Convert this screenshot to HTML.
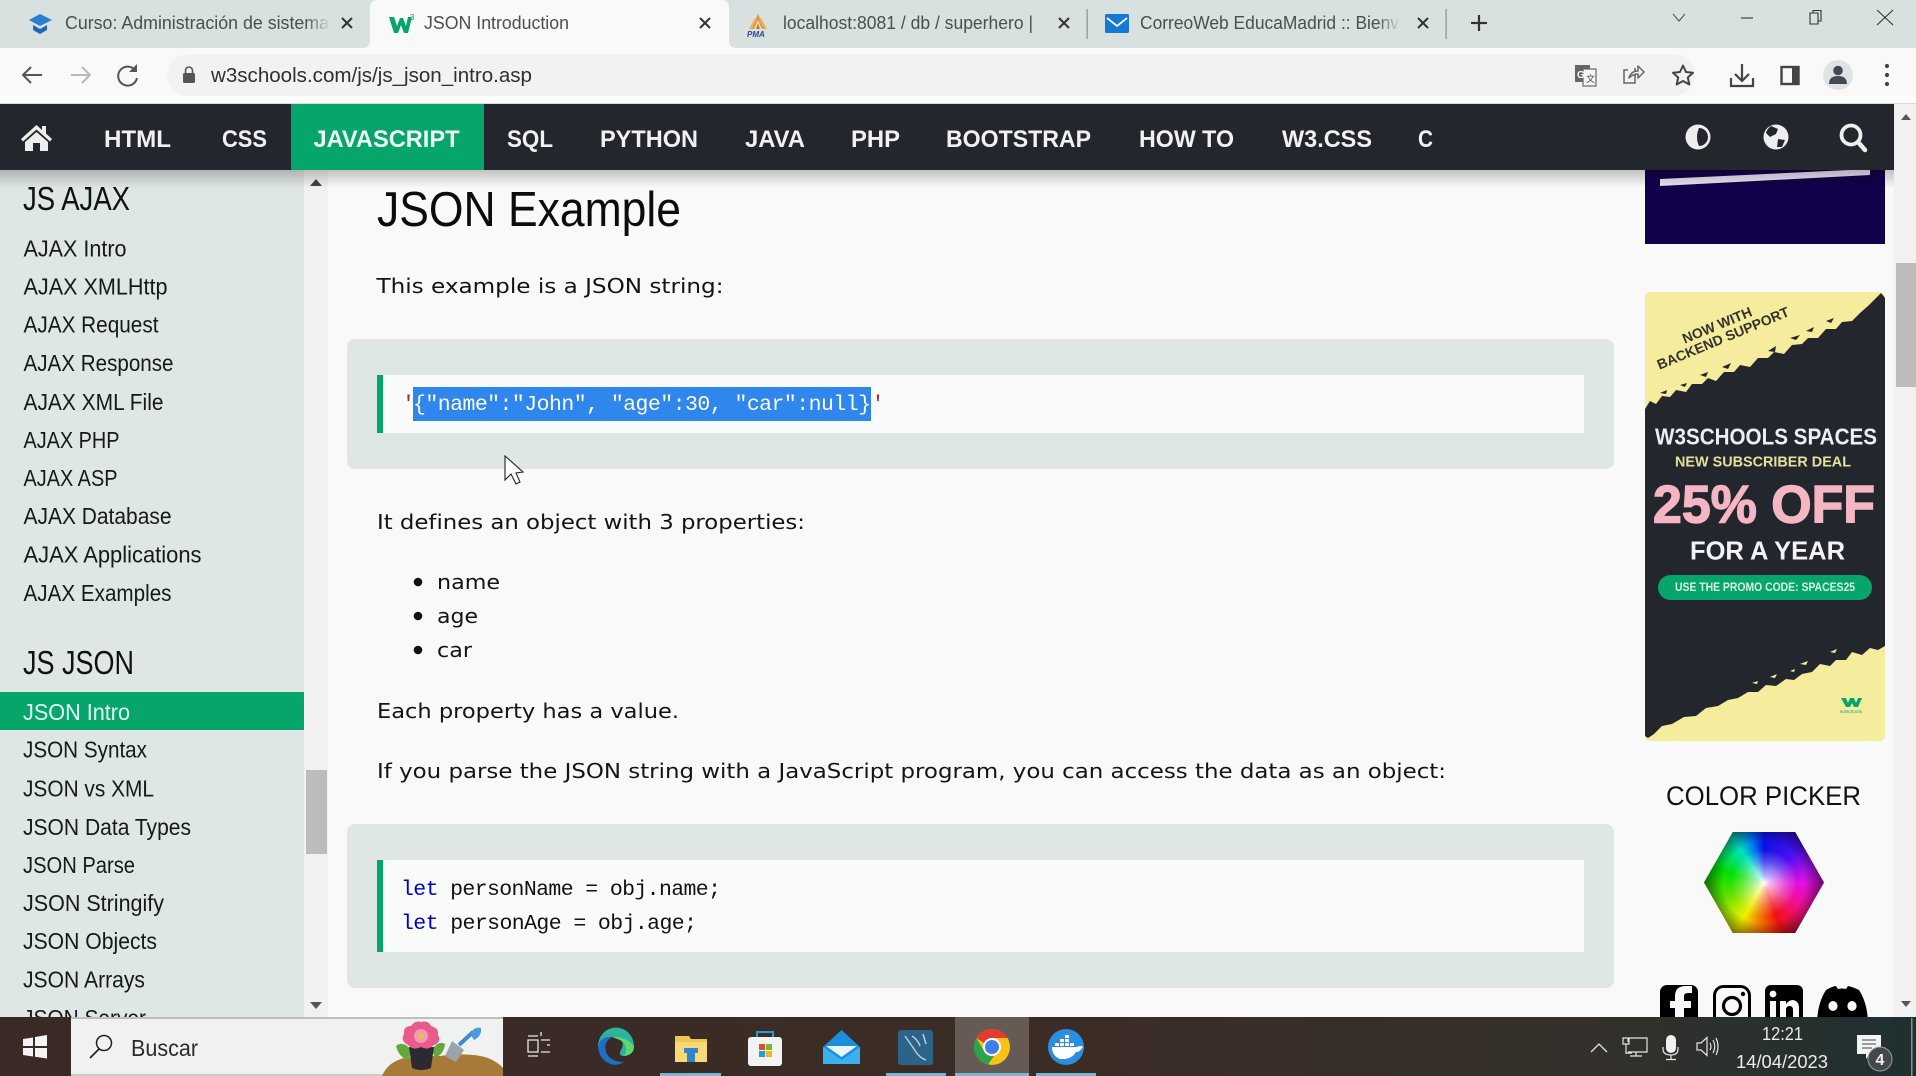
<!DOCTYPE html>
<html lang="es"><head><meta charset="utf-8"><title>JSON Introduction</title>
<style>
html,body{margin:0;padding:0;width:1916px;height:1076px;overflow:hidden;background:#f9f9f9}
svg{position:absolute;left:0;top:0;display:block}
.t{font:18px "Liberation Sans",sans-serif;fill:#4a4f50}
.n{font:bold 24.5px "Liberation Sans",sans-serif;fill:#f1f1f1}
.s{font:23.5px "Liberation Sans",sans-serif;fill:#15191a}
.h{font:33px "Liberation Sans",sans-serif;fill:#111}
.b{font:20px "DejaVu Sans",sans-serif;fill:#141414}
.m{font:21.5px "Liberation Mono",monospace;fill:#111}
.a{font-family:"Liberation Sans",sans-serif;font-weight:bold}
#hex{position:absolute;left:1704px;top:832px;width:120px;height:101px;clip-path:polygon(24% 0,76% 0,100% 50%,76% 100%,24% 100%,0 50%);
background:radial-gradient(circle 60px at 50% 50%,#fff 0,rgba(255,255,255,.7) 10%,rgba(255,255,255,.25) 36%,rgba(255,255,255,0) 55%),radial-gradient(circle 60px at 50% 50%,rgba(0,0,0,0) 68%,rgba(0,0,0,.55) 100%),conic-gradient(from 0deg at 50% 50%,#0a10e0 0deg,#4a10f0 45deg,#e010e0 90deg,#f0108a 125deg,#f01010 160deg,#f08a00 190deg,#f0f000 210deg,#60e000 250deg,#00e000 285deg,#00e0c0 325deg,#0070f0 345deg,#0a10e0 360deg)}
</style></head><body>
<svg width="1916" height="1076" viewBox="0 0 1916 1076" xmlns="http://www.w3.org/2000/svg">
<defs>
<linearGradient id="f1"><stop offset="0" stop-color="#d8e0e0" stop-opacity="0"/><stop offset="1" stop-color="#d8e0e0"/></linearGradient>
<linearGradient id="sh" x1="0" y1="0" x2="0" y2="1"><stop offset="0" stop-color="#000" stop-opacity=".22"/><stop offset="1" stop-color="#000" stop-opacity="0"/></linearGradient>
<linearGradient id="tb"><stop offset="0" stop-color="#3a2a25"/><stop offset=".55" stop-color="#3c2c26"/><stop offset=".82" stop-color="#35302b"/><stop offset="1" stop-color="#1f3030"/></linearGradient>
</defs>

<!-- page -->
<rect width="1916" height="1076" fill="#f9f9f9"/>
<rect x="0" y="170" width="304" height="850" fill="#dfe6e6"/>
<rect x="304" y="170" width="24" height="850" fill="#f1f1f1"/>
<rect x="306" y="770" width="21" height="84" fill="#bcbcbc"/>
<path d="M310 186l6-7 6 7z" fill="#444"/><path d="M310 1002l6 7 6-7z" fill="#555"/>

<!-- sidebar -->
<text class="h" x="23" y="210" textLength="107" lengthAdjust="spacingAndGlyphs">JS AJAX</text>
<text class="s" x="23.500" y="256.500" textLength="103" lengthAdjust="spacingAndGlyphs">AJAX Intro</text>
<text class="s" x="23.500" y="294.500" textLength="144" lengthAdjust="spacingAndGlyphs">AJAX XMLHttp</text>
<text class="s" x="23.500" y="332.500" textLength="135" lengthAdjust="spacingAndGlyphs">AJAX Request</text>
<text class="s" x="23.500" y="371" textLength="150" lengthAdjust="spacingAndGlyphs">AJAX Response</text>
<text class="s" x="23.500" y="410" textLength="140" lengthAdjust="spacingAndGlyphs">AJAX XML File</text>
<text class="s" x="23.500" y="448" textLength="96" lengthAdjust="spacingAndGlyphs">AJAX PHP</text>
<text class="s" x="23.500" y="486" textLength="94" lengthAdjust="spacingAndGlyphs">AJAX ASP</text>
<text class="s" x="23.500" y="524" textLength="148" lengthAdjust="spacingAndGlyphs">AJAX Database</text>
<text class="s" x="23.500" y="562.500" textLength="178" lengthAdjust="spacingAndGlyphs">AJAX Applications</text>
<text class="s" x="23.500" y="601" textLength="148" lengthAdjust="spacingAndGlyphs">AJAX Examples</text>
<text class="h" x="23" y="674" textLength="111" lengthAdjust="spacingAndGlyphs">JS JSON</text>
<rect x="0" y="692" width="304" height="38" fill="#06a56c"/>
<text class="s" x="23" y="720" textLength="107" lengthAdjust="spacingAndGlyphs" style="fill:#e8fff6">JSON Intro</text>
<text class="s" x="23" y="757.500" textLength="124" lengthAdjust="spacingAndGlyphs">JSON Syntax</text>
<text class="s" x="23" y="796.500" textLength="131" lengthAdjust="spacingAndGlyphs">JSON vs XML</text>
<text class="s" x="23" y="835" textLength="168" lengthAdjust="spacingAndGlyphs">JSON Data Types</text>
<text class="s" x="23" y="873" textLength="112" lengthAdjust="spacingAndGlyphs">JSON Parse</text>
<text class="s" x="23" y="911" textLength="141" lengthAdjust="spacingAndGlyphs">JSON Stringify</text>
<text class="s" x="23" y="949" textLength="134" lengthAdjust="spacingAndGlyphs">JSON Objects</text>
<text class="s" x="23" y="987.500" textLength="122" lengthAdjust="spacingAndGlyphs">JSON Arrays</text>
<text class="s" x="23" y="1026" textLength="123" lengthAdjust="spacingAndGlyphs">JSON Server</text>

<!-- main -->
<text x="377" y="226" textLength="304" lengthAdjust="spacingAndGlyphs" style="font:49px 'Liberation Sans',sans-serif;fill:#0c0c0c">JSON Example</text>
<text class="b" x="376.500" y="293" textLength="347" lengthAdjust="spacingAndGlyphs">This example is a JSON string:</text>

<rect x="347" y="339" width="1267" height="130" rx="8" fill="#dfe6e6"/>
<rect x="377" y="375" width="1207" height="58" fill="#f9fafa"/>
<rect x="377" y="375" width="6" height="58" fill="#06a56c"/>
<text class="m" x="402" y="410" style="fill:#a52a2a">'</text>
<rect x="413" y="387" width="458" height="34" fill="#2f86ed"/>
<text class="m" x="413" y="410" textLength="458" style="fill:#fff">{"name":"John", "age":30, "car":null}</text>
<text class="m" x="871.500" y="410" style="fill:#a52a2a">'</text>

<text class="b" x="377" y="529" textLength="428" lengthAdjust="spacingAndGlyphs">It defines an object with 3 properties:</text>
<circle cx="418" cy="582" r="4.300" fill="#111"/><circle cx="418" cy="616" r="4.300" fill="#111"/><circle cx="418" cy="650" r="4.300" fill="#111"/>
<text class="b" x="437" y="589" textLength="63" lengthAdjust="spacingAndGlyphs">name</text>
<text class="b" x="437" y="623" textLength="41" lengthAdjust="spacingAndGlyphs">age</text>
<text class="b" x="437" y="657" textLength="35" lengthAdjust="spacingAndGlyphs">car</text>
<text class="b" x="377" y="718" textLength="302" lengthAdjust="spacingAndGlyphs">Each property has a value.</text>
<text class="b" x="377" y="778" textLength="1069" lengthAdjust="spacingAndGlyphs">If you parse the JSON string with a JavaScript program, you can access the data as an object:</text>

<rect x="347" y="824" width="1267" height="164" rx="8" fill="#dfe6e6"/>
<rect x="377" y="860" width="1207" height="92" fill="#f9fafa"/>
<rect x="377" y="860" width="6" height="92" fill="#06a56c"/>
<text class="m" x="401" y="895" textLength="320"><tspan fill="#0000cd">let</tspan> personName = obj.name;</text>
<text class="m" x="401" y="929" textLength="296"><tspan fill="#0000cd">let</tspan> personAge = obj.age;</text>

<!-- mouse cursor -->
<path d="M505 456L505 480L511 474L516 484L520 482L516 473L523 472Z" fill="#fff" stroke="#222" stroke-width="1.100"/>

<!-- right column -->
<rect x="1645" y="170" width="240" height="74" fill="#13004a"/>
<path d="M1660 179L1870 169L1870 175L1660 186Z" fill="#e8e2f4"/>

<rect x="1645" y="292" width="240" height="449" rx="5" fill="#f5ec9d"/>
<path d="M1645 409L1650 401L1656 404L1662 396L1670 397L1676 390L1686 392L1692 384L1702 384L1708 378L1716 381L1724 372L1734 372L1740 365L1750 367L1758 358L1768 358L1774 352L1784 354L1792 345L1802 344L1808 338L1818 338L1826 329L1836 329L1842 322L1852 321L1860 313L1868 306L1874 300L1881 293L1885 298L1885 646L1878 650L1870 648L1862 655L1852 652L1846 660L1836 660L1830 666L1820 664L1812 672L1802 674L1794 680L1786 679L1776 686L1766 685L1758 692L1748 692L1738 698L1728 700L1718 706L1706 708L1696 716L1684 717L1672 724L1662 726L1654 734L1648 738L1645 736Z" fill="#24262e"/>
<path d="M1700 375l8-3-2 5zM1722 367l9-4-3 6zM1768 351l8-5-1 6zM1790 338l10-3-4 5zM1806 331l8-4-2 5zM1826 321l8-3-3 5zM1660 393l7-3-1 4zM1680 385l7-2-2 4z" fill="#24262e"/>
<path d="M1770 677l7-3-2 4zM1800 664l8-3-2 4zM1830 652l7-3-2 4zM1752 683l6-2-1 3zM1790 671l5-2-1 3z" fill="#f5ec9d"/>
<g class="a" fill="#33352c">
<text x="1717" y="330" text-anchor="middle" font-size="14" transform="rotate(-22.500 1717 325)">NOW WITH</text>
<text x="1723" y="343" text-anchor="middle" font-size="14" transform="rotate(-22.500 1723 338)">BACKEND SUPPORT</text>
</g>
<g class="a">
<text x="1655" y="444.500" font-size="23.500" fill="#eceef4" textLength="222" lengthAdjust="spacingAndGlyphs">W3SCHOOLS SPACES</text>
<text x="1675" y="466.500" font-size="15" fill="#e4e09a" textLength="176" lengthAdjust="spacingAndGlyphs">NEW SUBSCRIBER DEAL</text>
<text x="1653" y="522.500" font-size="53" fill="#f4b6c2" stroke="#f4b6c2" stroke-width="1.400" textLength="222" lengthAdjust="spacingAndGlyphs">25% OFF</text>
<text x="1690" y="559.500" font-size="26" fill="#f2f3f7" textLength="155" lengthAdjust="spacingAndGlyphs">FOR A YEAR</text>
<rect x="1658" y="575" width="214" height="25" rx="12.500" fill="#06a56c"/>
<text x="1675" y="591" font-size="11.500" fill="#d8f4e6" textLength="180" lengthAdjust="spacingAndGlyphs">USE THE PROMO CODE: SPACES25</text>
</g>
<path d="M1841 698L1846 698L1848 703L1850 698L1854 698L1856 703L1858 698L1862 698L1858 707L1854 707L1852 703L1850 707L1846 707Z" fill="#06a56c"/>
<text x="1840" y="713" font-size="4.500" fill="#06a56c" font-family="Liberation Sans" textLength="22">w3schools</text>

<text x="1666" y="805" textLength="195" lengthAdjust="spacingAndGlyphs" style="font:27px 'Liberation Sans',sans-serif;fill:#111">COLOR PICKER</text>

<!-- social -->
<rect x="1660" y="985" width="38" height="45" rx="7" fill="#000"/>
<path d="M1684 1030V1008H1691V1001H1684V996Q1684 993 1688 993H1692V986H1686Q1675 986 1675 996V1001H1670V1008H1675V1030Z" fill="#f9f9f9"/>
<rect x="1714.500" y="986.500" width="35" height="42" rx="9" fill="none" stroke="#000" stroke-width="3"/>
<circle cx="1732" cy="1006" r="8.500" fill="none" stroke="#000" stroke-width="3.200"/><circle cx="1743" cy="994" r="2.200" fill="#000"/>
<rect x="1765" y="985" width="38" height="45" rx="6" fill="#000"/>
<rect x="1770" y="1001" width="6" height="20" fill="#f9f9f9"/><circle cx="1773" cy="994" r="3.400" fill="#f9f9f9"/>
<path d="M1780 1021V1001H1786V1004Q1789 1000 1793 1000Q1799 1001 1799 1008V1021H1793V1010Q1793 1006 1789.500 1006Q1786 1006 1786 1010V1021Z" fill="#f9f9f9"/>
<path d="M1826 990Q1833 986 1836 986L1838 989Q1842 988 1846 989L1848 986Q1853 987 1859 990Q1868 1004 1868 1025H1817Q1817 1004 1826 990Z" fill="#000"/>
<ellipse cx="1833" cy="1006" rx="4.600" ry="5" fill="#f9f9f9"/><ellipse cx="1852" cy="1006" rx="4.600" ry="5" fill="#f9f9f9"/>

<!-- main scrollbar -->
<rect x="1894" y="104" width="22" height="920" fill="#f1f1f1"/>
<rect x="1896" y="263" width="20" height="124" fill="#bcbcbc"/>
<path d="M1901 120l5-6 5 6z" fill="#555"/><path d="M1901 1001l5 6 5-6z" fill="#555"/>

<!-- nav shadow -->
<rect x="0" y="170" width="1894" height="18" fill="url(#sh)"/>

<!-- chrome: tabs -->
<rect width="1916" height="48" fill="#d8e0e0"/>
<path d="M362 48Q370 48 370 40V8Q370 0 378 0H721Q729 0 729 8V40Q729 48 737 48Z" fill="#f9f9f9"/>
<path d="M29 20L40 14L52 20L40 26Z" fill="#2a7fd0"/><path d="M33 25V30L40 34L47 30V25L40 29Z" fill="#1f66b8"/>
<text class="t" x="65" y="29" textLength="264" lengthAdjust="spacingAndGlyphs">Curso: Administración de sistema</text>
<rect x="305" y="10" width="26" height="26" fill="url(#f1)"/>
<path d="M342 18l10 10M352 18l-10 10" stroke="#333" stroke-width="2"/>
<path d="M389 17L394 17L397 26L400 18L403 18L406 26L408 17L412 17L408 33L404 33L401 25L398 33L394 33Z" fill="#06a56c"/><text x="410" y="20" font-size="8" fill="#06a56c" font-family="Liberation Sans">3</text>
<text class="t" x="424" y="29" textLength="145" lengthAdjust="spacingAndGlyphs">JSON Introduction</text>
<path d="M700 18l10 10M710 18l-10 10" stroke="#333" stroke-width="2"/>
<path d="M758 14L751 29H754L758 20L762 29H765Z" fill="#e8942a"/><path d="M749 29L755 18L757 19L752 29ZM767 29L761 18L759 19L764 29Z" fill="#eab060"/><path d="M756 29L758 23L760 29Z" fill="#d8781c"/><text x="747" y="37" font-size="8" font-style="italic" font-weight="bold" fill="#26489a" font-family="Liberation Sans">PMA</text>
<text class="t" x="783" y="29" textLength="250" lengthAdjust="spacingAndGlyphs">localhost:8081 / db / superhero |</text>
<path d="M1059 18l10 10M1069 18l-10 10" stroke="#333" stroke-width="2"/>
<rect x="1086.500" y="9" width="1.200" height="30" fill="#8a9090"/>
<rect x="1105" y="14" width="24" height="19" rx="1.500" fill="#1478d4"/><path d="M1107 18L1117 26L1127 18" fill="none" stroke="#fff" stroke-width="1.800"/>
<text class="t" x="1140" y="29" textLength="259" lengthAdjust="spacingAndGlyphs">CorreoWeb EducaMadrid :: Bienv</text>
<rect x="1377" y="10" width="24" height="26" fill="url(#f1)"/>
<path d="M1418 18l10 10M1428 18l-10 10" stroke="#333" stroke-width="2"/>
<rect x="1445.500" y="9" width="1.200" height="30" fill="#8a9090"/>
<path d="M1479 15V31M1471 23H1487" stroke="#333" stroke-width="2.200"/>
<path d="M1673 14L1679 21L1685 14" fill="none" stroke="#555" stroke-width="1.100"/>
<path d="M1741 18H1753" stroke="#333" stroke-width="1.100"/>
<path d="M1810 13H1818V24H1810Z M1813 13V10.500H1821V21H1818" fill="none" stroke="#333" stroke-width="1.100"/>
<path d="M1877 10L1893 25M1893 10L1877 25" stroke="#333" stroke-width="1.100"/>

<!-- chrome: toolbar -->
<rect x="0" y="48" width="1916" height="56" fill="#f9f9f9"/>
<rect x="0" y="96" width="1916" height="8" fill="#fdfdfd"/>
<rect x="0" y="103" width="1916" height="1" fill="#dcdcdc"/>
<rect x="167" y="54" width="1528" height="42" rx="21" fill="#f1f3f3"/>
<path d="M42 75H24M31 67L23 75L31 83" fill="none" stroke="#555" stroke-width="2"/>
<path d="M71 75H89M82 67L90 75L82 83" fill="none" stroke="#b5b9b9" stroke-width="2"/>
<path d="M135 70A9.500 9.500 0 1 0 137 78" fill="none" stroke="#555" stroke-width="2"/><path d="M137 64V72H129Z" fill="#555"/>
<rect x="183" y="73" width="12" height="10" rx="1.500" fill="#555"/><path d="M185.500 73V70.500A3.500 3.500 0 0 1 192.500 70.500V73" fill="none" stroke="#555" stroke-width="1.600"/>
<text x="211" y="82" textLength="321" lengthAdjust="spacingAndGlyphs" style="font:20.500px 'Liberation Sans',sans-serif;fill:#2c3030">w3schools.com/js/js_json_intro.asp</text>
<!-- translate -->
<rect x="1575" y="65" width="15" height="17" fill="#666"/><rect x="1583" y="69" width="13" height="17" fill="#f4f6f6" stroke="#666" stroke-width="1.200"/>
<text x="1577" y="78" font-size="10" font-weight="bold" fill="#fff" font-family="Liberation Sans">G</text><text x="1586" y="82" font-size="9" fill="#444" font-family="Noto Sans CJK SC">文</text>
<!-- share -->
<path d="M1635 68V83H1624V70H1628" fill="none" stroke="#666" stroke-width="1.500"/><path d="M1629 78Q1631 71 1638 71V66L1644 72L1638 78V74Q1633 74 1629 78Z" fill="#f1f3f3" stroke="#666" stroke-width="1.500" stroke-linejoin="round"/>
<!-- star -->
<path d="M1683 65.500L1686 72L1693 72.800L1687.800 77.500L1689.300 84.500L1683 81L1676.700 84.500L1678.200 77.500L1673 72.800L1680 72Z" fill="none" stroke="#444" stroke-width="2" stroke-linejoin="round"/>
<!-- download -->
<path d="M1742 64V80M1735 74L1742 81L1749 74" fill="none" stroke="#444" stroke-width="2.200"/><path d="M1731 78V86H1753V78" fill="none" stroke="#444" stroke-width="2.200"/>
<!-- side panel -->
<rect x="1781.500" y="67" width="17" height="17" fill="#f9f9f9" stroke="#444" stroke-width="2.400"/><rect x="1792" y="67" width="7" height="17" fill="#444"/>
<!-- profile -->
<circle cx="1838" cy="75" r="15" fill="#dfe3e6"/><circle cx="1838" cy="70.500" r="4.800" fill="#454a52"/><path d="M1829 84Q1829 76 1838 76Q1847 76 1847 84Z" fill="#454a52"/>
<circle cx="1887" cy="66" r="2.100" fill="#444"/><circle cx="1887" cy="75" r="2.100" fill="#444"/><circle cx="1887" cy="84" r="2.100" fill="#444"/>

<!-- site nav -->
<rect x="0" y="104" width="1894" height="66" fill="#24262e"/>
<rect x="291" y="104" width="193" height="66" fill="#06a56c"/>
<path d="M36.500 125L21 139L23 141.500L36.500 129.500L50 141.500L52 139L46 133.500V126H42V130Z" fill="#eee"/><path d="M25 142L36.500 132L48 142V151H40V143H33V151H25Z" fill="#eee"/>
<text class="n" x="104" y="147" textLength="67" lengthAdjust="spacingAndGlyphs">HTML</text>
<text class="n" x="222" y="147" textLength="45" lengthAdjust="spacingAndGlyphs">CSS</text>
<text class="n" x="313.500" y="147" textLength="146" lengthAdjust="spacingAndGlyphs" style="fill:#f0fbf6">JAVASCRIPT</text>
<text class="n" x="507" y="147" textLength="46" lengthAdjust="spacingAndGlyphs">SQL</text>
<text class="n" x="600" y="147" textLength="98" lengthAdjust="spacingAndGlyphs">PYTHON</text>
<text class="n" x="745" y="147" textLength="60" lengthAdjust="spacingAndGlyphs">JAVA</text>
<text class="n" x="851" y="147" textLength="49" lengthAdjust="spacingAndGlyphs">PHP</text>
<text class="n" x="946" y="147" textLength="145" lengthAdjust="spacingAndGlyphs">BOOTSTRAP</text>
<text class="n" x="1139" y="147" textLength="95" lengthAdjust="spacingAndGlyphs">HOW TO</text>
<text class="n" x="1282" y="147" textLength="90" lengthAdjust="spacingAndGlyphs">W3.CSS</text>
<text class="n" x="1418" y="147" textLength="15" lengthAdjust="spacingAndGlyphs">C</text>
<circle cx="1698" cy="137" r="12.500" fill="#eee"/><path d="M1699 128A9 9 0 0 1 1699 146Q1695 137 1699 128Z" fill="#24262e"/>
<circle cx="1776" cy="137" r="12.500" fill="#eee"/><path d="M1771 126L1778 129L1776 134L1770 137L1766 133Q1767 129 1771 126ZM1778 139L1785 140L1782 147L1777 147Z" fill="#24262e"/>
<circle cx="1851" cy="135" r="9.500" fill="none" stroke="#eee" stroke-width="3.800"/><path d="M1858 142L1865 150" stroke="#eee" stroke-width="4.500" stroke-linecap="round"/>

<!-- taskbar -->
<rect x="0" y="1017" width="1916" height="59" fill="url(#tb)"/>
<path d="M23 1039L33 1037.500V1046H23ZM35 1037L47 1035V1046H35ZM23 1048H33V1056.500L23 1055ZM35 1048H47V1058.500L35 1056.800Z" fill="#f4f4f4"/>
<rect x="71" y="1017" width="432" height="59" fill="#f0f2f2"/><rect x="71" y="1017" width="432" height="2" fill="#bdbfbf"/><rect x="71" y="1074" width="432" height="2" fill="#c9cbcb"/>
<circle cx="104" cy="1043" r="7.500" fill="none" stroke="#222" stroke-width="1.500"/><path d="M99 1049L90 1058" stroke="#222" stroke-width="1.700"/>
<text x="131" y="1056" textLength="67" lengthAdjust="spacingAndGlyphs" style="font:23px 'Liberation Sans',sans-serif;fill:#2a2a2a">Buscar</text>
<!-- plant search art -->
<path d="M382 1076Q388 1062 404 1058Q420 1056 440 1056Q470 1052 488 1058Q498 1062 503 1068V1076Z" fill="#a87a3a"/>
<path d="M396 1046Q403 1040 411 1050L409 1060Q399 1058 396 1046ZM432 1050Q438 1040 445 1044Q444 1054 435 1058Z" fill="#62a83a"/>
<path d="M409 1047H434L431 1068Q421 1072 412 1068Z" fill="#2c2a30"/>
<path d="M421 1022Q428 1020 431 1026Q439 1028 438 1035Q442 1042 434 1045Q428 1051 421 1047Q413 1051 408 1045Q400 1041 404 1034Q403 1026 411 1026Q415 1020 421 1022Z" fill="#ea5a8c"/><circle cx="421" cy="1036" r="7" fill="#f59ab5"/><circle cx="421" cy="1036" r="3" fill="#e9c04e"/>
<path d="M452 1041L464 1050L456 1062L445 1056Z" fill="#9aa3a8"/><path d="M459 1045L473 1032" stroke="#3d8ad8" stroke-width="4"/><path d="M470 1034Q474 1026 481 1028Q482 1036 474 1040Z" fill="#4a9ae0"/>
<!-- task view -->
<path d="M528 1040H538V1052H528ZM541 1040H550M528 1036H538M528 1056H538M541 1052H550M541 1036V1032M547 1045H550" fill="none" stroke="#e8e8e8" stroke-width="1.300"/>
<!-- edge -->
<path d="M598 1047A18 19 0 0 1 634 1046Q634 1055 624 1056Q617 1056 622 1048Q625 1040 616 1037Q606 1036 602 1044Z" fill="#2bb3a0"/>
<path d="M598 1047Q600 1036 612 1037Q603 1042 606 1052Q610 1062 624 1062Q616 1067 608 1063Q599 1058 598 1047Z" fill="#1c6fc4"/>
<path d="M612 1037Q625 1036 634 1046Q634 1055 624 1056Q630 1046 620 1040Z" fill="#5fd96f"/>
<!-- explorer -->
<path d="M675 1036H689L691 1039H707V1062H675Z" fill="#f2c64d"/><rect x="675" y="1042" width="32" height="20" fill="#f7d976"/><rect x="684" y="1048" width="14" height="5" fill="#2f86c8"/><rect x="687" y="1053" width="8" height="9" fill="#2f86c8"/>
<rect x="660" y="1073" width="61" height="3" fill="#7fb3d5"/>
<!-- store -->
<rect x="748" y="1037" width="34" height="29" rx="3" fill="#f3f3f3"/><path d="M757 1037V1032H773V1037" fill="none" stroke="#1f9fd8" stroke-width="2"/>
<rect x="759" y="1044" width="6" height="6" fill="#e24c2c"/><rect x="766" y="1044" width="6" height="6" fill="#7db82a"/><rect x="759" y="1051" width="6" height="6" fill="#1f9fe0"/><rect x="766" y="1051" width="6" height="6" fill="#f3b81f"/>
<!-- mail -->
<path d="M841.500 1030L860 1047V1064H823V1047Z" fill="#1c8fdc"/><path d="M826 1046H857L841.500 1057Z" fill="#e8f6fc"/><path d="M823 1047L841.500 1060L860 1047V1064H823Z" fill="#3db0ee"/>
<!-- workbench -->
<rect x="898" y="1030" width="35" height="35" rx="3" fill="#2c6388"/><path d="M905 1036Q912 1046 916 1052Q920 1058 926 1060M912 1036Q918 1040 920 1046M923 1034L926 1044" fill="none" stroke="#b6cfdc" stroke-width="1.500"/>
<rect x="886" y="1073" width="60" height="3" fill="#7fb3d5"/>
<!-- chrome -->
<rect x="955" y="1017" width="74" height="59" fill="#665a55"/>
<circle cx="992" cy="1047" r="18" fill="#fbc116"/>
<path d="M992 1029A18 18 0 0 1 1007.600 1038H992A9 9 0 0 0 984 1043L976.400 1038A18 18 0 0 1 992 1029Z" fill="#e33b2e"/>
<path d="M976.400 1038L984.500 1052A9 9 0 0 0 994 1056L988 1064.600A18 18 0 0 1 976.400 1038Z" fill="#2aa34a"/>
<circle cx="992" cy="1047" r="9" fill="#fff"/><circle cx="992" cy="1047" r="7" fill="#3d7ee8"/>
<rect x="955" y="1073" width="74" height="3" fill="#7fb3d5"/>
<!-- docker -->
<circle cx="1066" cy="1047" r="18" fill="#2b8ee0"/>
<path d="M1052 1047H1077Q1081 1045 1083 1047Q1080 1052 1076 1052Q1071 1060 1060 1059Q1052 1056 1052 1047Z" fill="#fff"/>
<path d="M1055 1043h4v3h-4zM1060 1043h4v3h-4zM1065 1043h4v3h-4zM1060 1039h4v3h-4zM1065 1039h4v3h-4zM1065 1035h4v3h-4zM1070 1043h4v3h-4z" fill="#fff"/>
<rect x="1036" y="1073" width="60" height="3" fill="#7fb3d5"/>
<!-- tray -->
<path d="M1591 1052L1599 1044L1607 1052" fill="none" stroke="#e4e4e4" stroke-width="1.300"/>
<path d="M1629 1038H1647V1052H1628M1628 1038V1042M1623 1038H1629V1044H1623ZM1626 1044V1054M1626 1053H1632M1636 1052V1056M1630 1056H1642" fill="none" stroke="#e4e4e4" stroke-width="1.200"/>
<rect x="1666" y="1035" width="10" height="18" rx="5" fill="#f2f2f2"/><path d="M1663 1047V1049Q1663 1055 1671 1055Q1678 1055 1678 1049V1047M1671 1055V1059M1666 1059.500H1676" fill="none" stroke="#e8e8e8" stroke-width="1.200"/>
<path d="M1697 1043H1701L1707 1037.500V1055.500L1701 1050H1697Z" fill="none" stroke="#e4e4e4" stroke-width="1.200"/><path d="M1710 1043Q1712 1046.500 1710 1050M1713 1040Q1716.500 1046.500 1713 1053M1716 1038Q1720 1046.500 1716 1055" fill="none" stroke="#e4e4e4" stroke-width="1.200"/>
<text x="1762" y="1040" textLength="41" lengthAdjust="spacingAndGlyphs" style="font:18px 'Liberation Sans',sans-serif;fill:#ececec">12:21</text>
<text x="1736" y="1068" textLength="92" lengthAdjust="spacingAndGlyphs" style="font:18px 'Liberation Sans',sans-serif;fill:#ececec">14/04/2023</text>
<path d="M1857 1035H1881V1054H1870L1866 1059V1054H1857Z" fill="#f4f4f4"/><path d="M1862 1040H1876M1862 1044H1876M1862 1048H1872" stroke="#444" stroke-width="1"/>
<circle cx="1880" cy="1059" r="12" fill="#45484a" stroke="#9aa0a0" stroke-width="1"/>
<text x="1880" y="1065" text-anchor="middle" class="a" font-size="16" fill="#f0f0f0">4</text>
<rect x="1911" y="1018" width="1.500" height="58" fill="#8a9090"/>
</svg>
<div id="hex"></div>
</body></html>
